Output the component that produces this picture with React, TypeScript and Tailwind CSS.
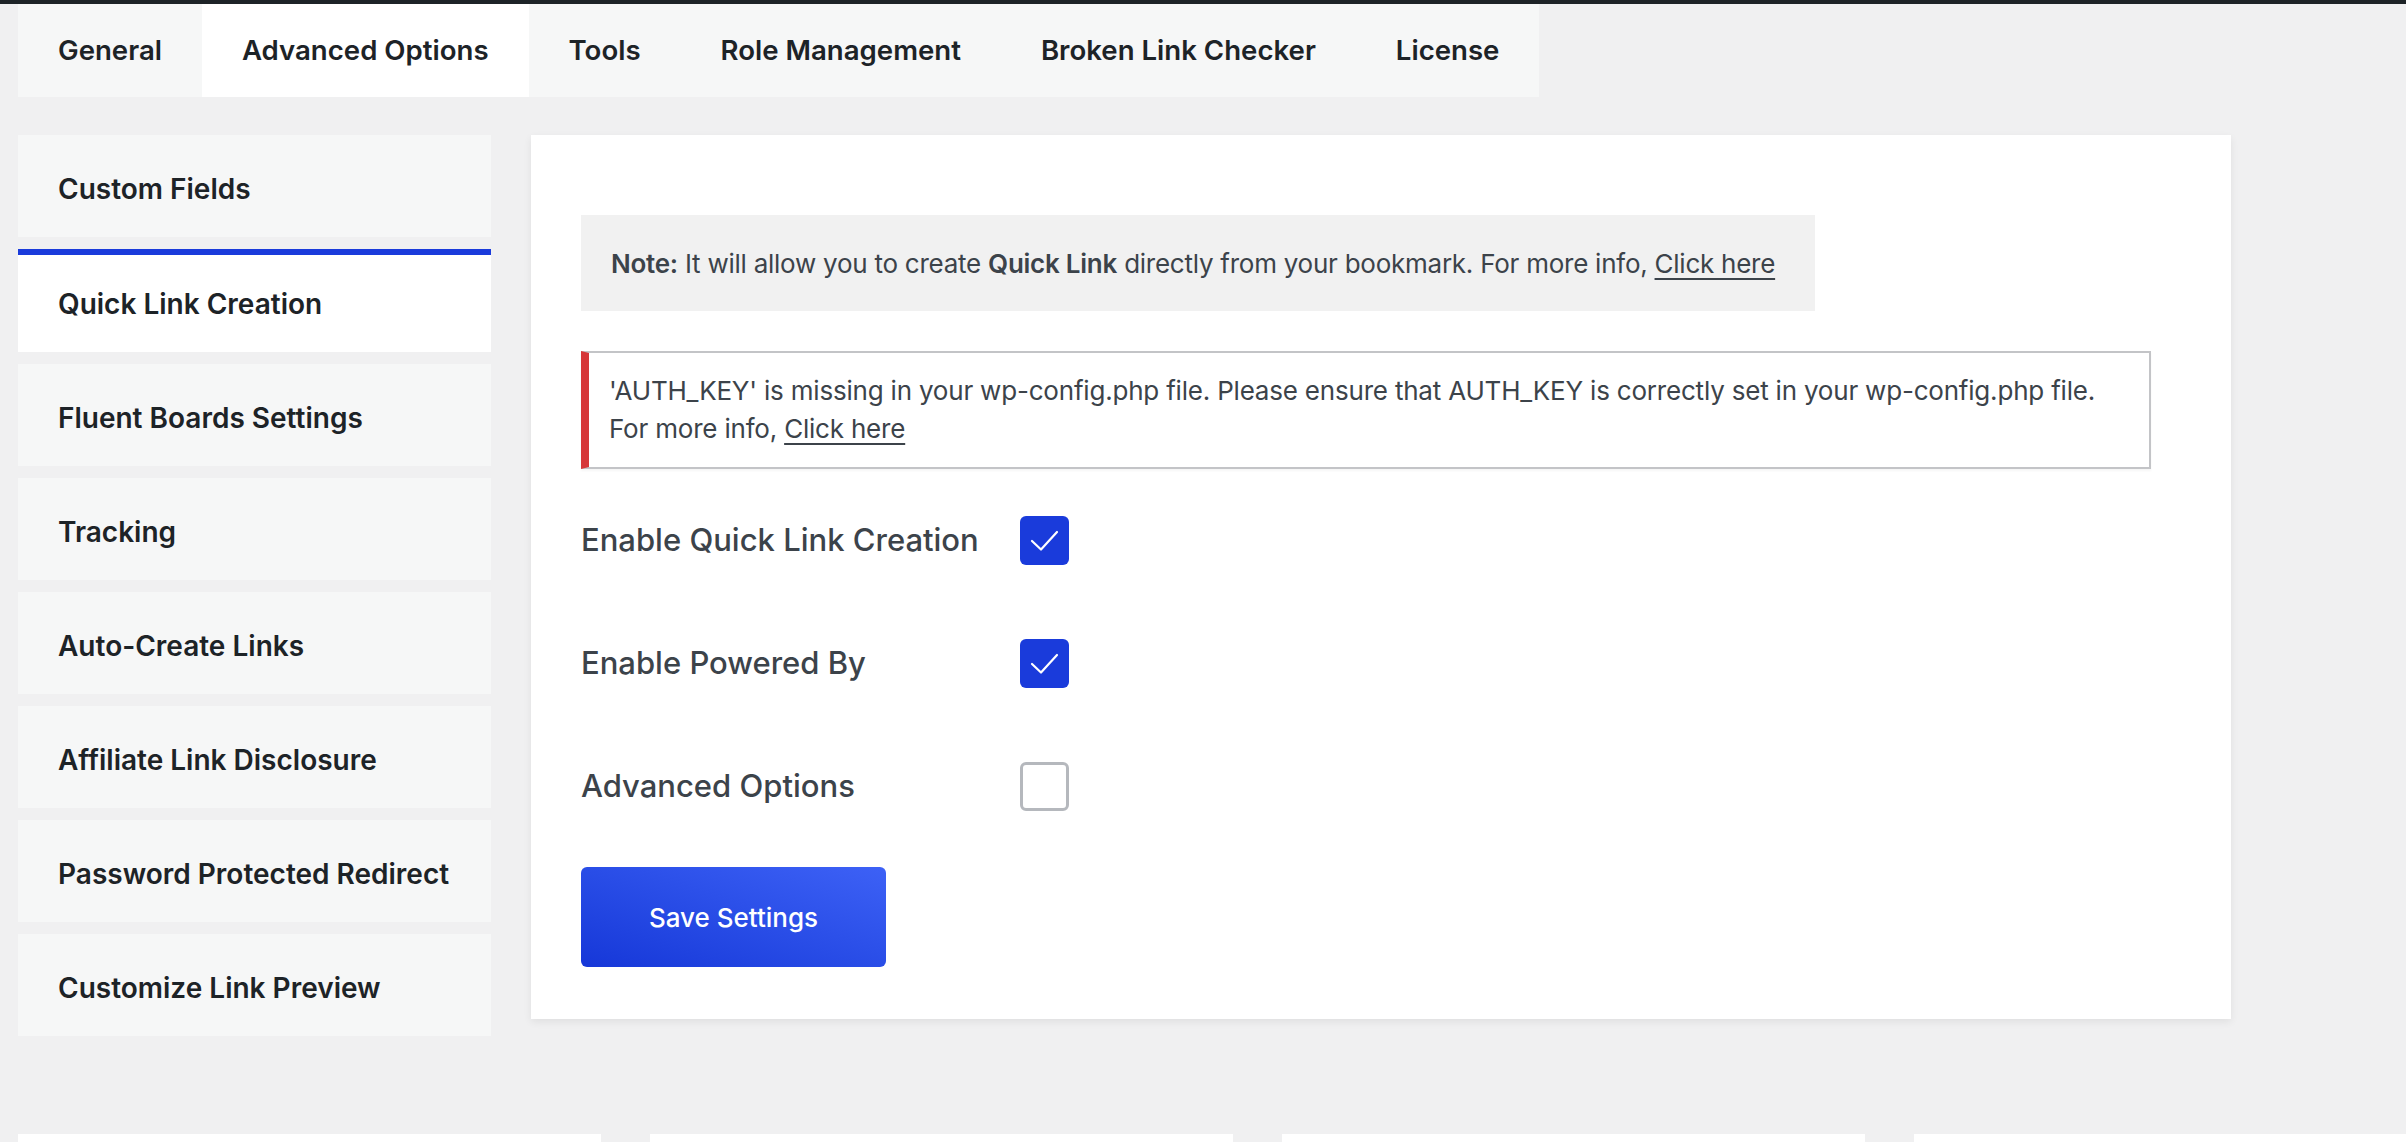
import { useState } from 'react'

const tabs = ['General', 'Advanced Options', 'Tools', 'Role Management', 'Broken Link Checker', 'License']

const sideItems = [
  'Custom Fields',
  'Quick Link Creation',
  'Fluent Boards Settings',
  'Tracking',
  'Auto-Create Links',
  'Affiliate Link Disclosure',
  'Password Protected Redirect',
  'Customize Link Preview',
]

function CheckBox({ checked, onToggle }: { checked: boolean; onToggle: () => void }) {
  return (
    <button
      type="button"
      onClick={onToggle}
      className={
        checked
          ? 'flex h-[49px] w-[49px] items-center justify-center rounded-[6px] bg-[#1a3bdb]'
          : 'flex h-[49px] w-[49px] items-center justify-center rounded-[6px] border-[3px] border-[#b5b8bd] bg-white'
      }
    >
      {checked && (
        <svg width="49" height="49" viewBox="0 0 49 49" fill="none">
          <path d="M12 25 L21 33.5 L37 16" stroke="white" strokeWidth="2.2" strokeLinecap="round" strokeLinejoin="round" />
        </svg>
      )}
    </button>
  )
}

export default function App() {
  const [activeTab, setActiveTab] = useState('Advanced Options')
  const [activeSide, setActiveSide] = useState('Quick Link Creation')
  const [opts, setOpts] = useState({ quickLink: true, poweredBy: true, advanced: false })

  function toggle(key: keyof typeof opts) {
    setOpts((prev) => ({ ...prev, [key]: !prev[key] }))
  }

  return (
    <div className="h-[1142px] overflow-hidden bg-[#f0f0f1] font-['Inter',sans-serif] text-[#1d2327]">
      <div className="h-[4px] bg-[#1d2327]" />

      <div className="pl-[18px]">
        <nav className="inline-flex h-[93px] bg-[#f6f7f7]">
          {tabs.map((t) => (
            <button
              key={t}
              type="button"
              onClick={() => setActiveTab(t)}
              className={
                t === activeTab
                  ? 'flex items-center bg-white px-[40px] text-[27.6px] font-semibold'
                  : 'flex items-center px-[40px] text-[27.6px] font-semibold'
              }
            >
              {t}
            </button>
          ))}
        </nav>
      </div>

      <div className="mt-[38px] flex items-start gap-[40px] pl-[18px]">
        <aside className="flex w-[473px] flex-col gap-[12px]">
          {sideItems.map((s) =>
            s === activeSide ? (
              <button
                key={s}
                type="button"
                className="flex h-[103px] items-center border-t-[6px] border-[#1a3bdb] bg-white pl-[40px] text-left text-[28px] font-semibold"
              >
                {s}
              </button>
            ) : (
              <button
                key={s}
                type="button"
                onClick={() => setActiveSide(s)}
                className="flex h-[102px] items-center border-t-[6px] border-transparent bg-[#f6f7f7] pl-[40px] text-left text-[28px] font-semibold"
              >
                {s}
              </button>
            )
          )}
        </aside>

        <main className="w-[1700px] bg-white pb-[52px] pl-[50px] pt-[80px] text-[#3c434a] shadow-[0_3px_8px_rgba(0,0,0,0.07)]">
          <div className="flex h-[96px] w-[1234px] items-center bg-[#f1f1f1] px-[30px] text-[26px] tracking-[-0.25px]">
            <p className="whitespace-nowrap">
              <strong className="font-semibold">Note:</strong> It will allow you to create{' '}
              <strong className="font-semibold">Quick Link</strong> directly from your bookmark. For more info,{' '}
              <a href="#" className="underline underline-offset-[5px]">Click here</a>
            </p>
          </div>

          <div className="mt-[40px] w-[1570px] border-2 border-l-[8px] border-[#c3c4c7] border-l-[#d63638] py-[19px] pl-[20px] pr-[20px] text-[26px] leading-[38px] tracking-[-0.2px] shadow-[0_2px_2px_rgba(0,0,0,0.04)]">
            'AUTH_KEY' is missing in your wp-config.php file. Please ensure that AUTH_KEY is correctly set in your wp-config.php file.
            <br />
            For more info, <a href="#" className="underline underline-offset-[5px]">Click here</a>
          </div>

          <div className="mt-[47px] flex flex-col gap-[74px]">
            <div className="flex h-[49px] items-center">
              <span className="w-[439px] text-[31px] font-medium">Enable Quick Link Creation</span>
              <CheckBox checked={opts.quickLink} onToggle={() => toggle('quickLink')} />
            </div>
            <div className="flex h-[49px] items-center">
              <span className="w-[439px] text-[31px] font-medium">Enable Powered By</span>
              <CheckBox checked={opts.poweredBy} onToggle={() => toggle('poweredBy')} />
            </div>
            <div className="flex h-[49px] items-center">
              <span className="w-[439px] text-[31px] font-medium">Advanced Options</span>
              <CheckBox checked={opts.advanced} onToggle={() => toggle('advanced')} />
            </div>
          </div>

          <button
            type="button"
            className="mt-[56px] h-[100px] w-[305px] rounded-[6px] bg-gradient-to-tr from-[#1637d8] to-[#3d61f6] text-[26px] font-medium text-white"
          >
            Save Settings
          </button>
        </main>
      </div>

      <div className="mt-[98px] flex gap-[49px] pl-[18px]">
        <div className="h-[40px] w-[583px] shrink-0 bg-white" />
        <div className="h-[40px] w-[583px] shrink-0 bg-white" />
        <div className="h-[40px] w-[583px] shrink-0 bg-white" />
        <div className="h-[40px] w-[583px] shrink-0 bg-white" />
      </div>
    </div>
  )
}
